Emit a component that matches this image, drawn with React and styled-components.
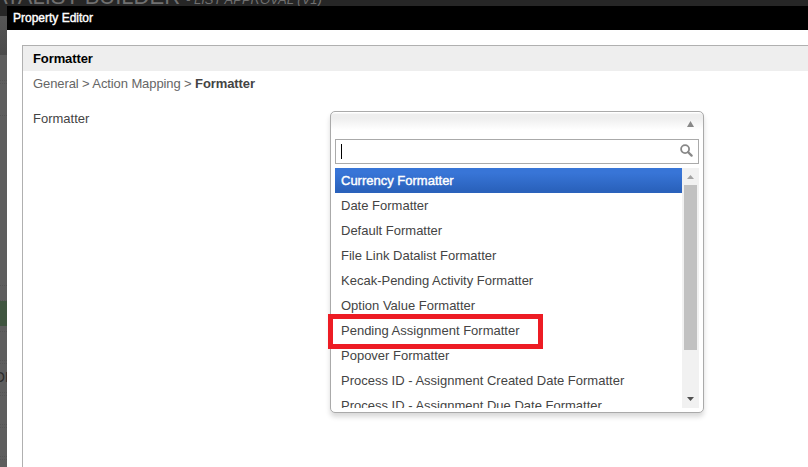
import React from 'react';
import styled, { createGlobalStyle } from 'styled-components';

const GlobalStyle = createGlobalStyle`
  * { box-sizing: border-box; }
  html, body { margin: 0; padding: 0; overflow: hidden; }
  body { font-family: "Liberation Sans", Arial, sans-serif; font-size: 13px; }
`;

const Page = styled.div`
  position: relative;
  width: 808px;
  height: 467px;
  overflow: hidden;
  background: #5e5e5e;
`;

const BuilderHeader = styled.header`
  height: 16px;
  overflow: hidden;
  background: #262626;
  color: #707070;
  white-space: nowrap;
`;

const BuilderHeading = styled.div`
  display: flex;
  align-items: baseline;
  margin: -16px 0 0 -7px;
`;

const BuilderTitle = styled.span`
  font-size: 22px;
  line-height: 26px;
`;

const BuilderSubtitle = styled.span`
  margin-left: 6px;
  font-size: 13px;
  font-style: italic;
`;

const BuilderToolbar = styled.div`
  height: 39px;
  background: linear-gradient(#555, #4b4b4b);
`;

const BuilderCanvas = styled.div`
  width: 7px;
  display: flex;
  flex-direction: column;
  overflow: hidden;
`;

const CanvasRow = styled.div`
  flex: none;
  height: ${(p) => p.$height}px;
  border-bottom: 1px dotted #555;
`;

const CanvasButton = styled.div`
  flex: none;
  height: 25px;
  background: #405540;
`;

const CanvasLabel = styled.div`
  flex: none;
  height: 28px;
  margin-left: -6px;
  color: #2b2b2b;
  font-size: 14px;
  line-height: 27px;
  white-space: nowrap;
`;

const Dialog = styled.section`
  position: absolute;
  inset: 6px 0 0 7px;
  display: flex;
  flex-direction: column;
  background: #fff;
`;

const TitleBar = styled.header`
  flex: none;
  height: 24px;
  padding-left: 6px;
  background: #000;
  color: #fff;
  font-size: 12px;
  -webkit-text-stroke: 0.4px #fff;
  line-height: 24px;
`;

const Panel = styled.div`
  flex: 1;
  margin: 15px 0 0 15px;
  border: solid #b0b0b0;
  border-width: 1px 0 0 1px;
`;

const PanelHeading = styled.h2`
  height: 25px;
  margin: 0;
  padding-left: 10px;
  background: #eee;
  color: #000;
  font-size: 13px;
  letter-spacing: -0.1px;
  line-height: 25px;
`;

const Breadcrumb = styled.nav`
  height: 40px;
  padding-left: 10px;
  color: #666;
  letter-spacing: -0.1px;
  line-height: 25px;
  white-space: pre;
  b { color: #444; }
`;

const Field = styled.div`
  display: flex;
  padding-left: 10px;
`;

const FieldLabel = styled.label`
  width: 297px;
  color: #444;
  line-height: 15px;
`;

const Select = styled.div`
  width: 374px;
  height: 302px;
  padding: 0 4px 4px;
  border: 1px solid #aaa;
  border-radius: 5px;
  background: #fff linear-gradient(#fff 0, #fff 1px, #eee 2px, #eee 6px, #fff 18px) no-repeat 0 0 / 100% 20px;
  box-shadow: 0 4px 5px rgba(0, 0, 0, 0.15);
`;

const SelectedValue = styled.div`
  height: 27px;
  padding: 9px 5px 0 0;
  display: flex;
  justify-content: flex-end;
`;

const SearchBox = styled.div`
  height: 25px;
  padding: 4px 5px;
  display: flex;
  justify-content: space-between;
  border: 1px solid #aaa;
`;

const Caret = styled.i`
  width: 1px;
  height: 15px;
  background: #000;
`;

const Results = styled.div`
  position: relative;
  height: 240px;
  margin-top: 4px;
  display: flex;
`;

const OptionList = styled.ul`
  flex: 1;
  margin: 0;
  padding: 0;
  list-style: none;
  overflow: hidden;
`;

const Option = styled.li`
  height: 25px;
  padding-left: 6px;
  color: ${(p) => (p.$active ? '#fff' : '#444')};
  background: ${(p) => (p.$active ? 'linear-gradient(#3875d7 20%, #2a62bc 90%)' : 'none')};
  -webkit-text-stroke: ${(p) => (p.$active ? '0.4px #fff' : '0')};
  line-height: 25px;
  white-space: nowrap;
`;

const Highlight = styled.span`
  position: absolute;
  left: -7px;
  top: 146px;
  width: 215px;
  height: 35px;
  border: 5px solid #ed1c24;
`;

const Scrollbar = styled.div`
  width: 17px;
  display: flex;
  flex-direction: column;
  align-items: center;
  background: #f1f1f1;
`;

const ScrollButton = styled.div`
  height: 17px;
  padding-top: ${(p) => p.$offset}px;
  display: flex;
`;

const Thumb = styled.div`
  width: 13px;
  height: 165px;
  margin-bottom: auto;
  background: #c1c1c1;
`;

const Triangle = ({ down, color, height = 4 }) => (
  <svg width="7" height={height} viewBox="0 0 7 4" preserveAspectRatio="none">
    <path d={down ? 'M0 0H7L3.5 4Z' : 'M0 4H7L3.5 0Z'} fill={color} />
  </svg>
);

const SearchIcon = () => (
  <svg width="13" height="13" viewBox="0 0 13 13" fill="none" stroke="#888">
    <circle cx="5.1" cy="5.1" r="4" strokeWidth="1.8" />
    <path d="M8.2 8.2L11.6 11.6" strokeWidth="2.3" strokeLinecap="round" />
  </svg>
);

const options = [
  { label: 'Currency Formatter', active: true },
  { label: 'Date Formatter' },
  { label: 'Default Formatter' },
  { label: 'File Link Datalist Formatter' },
  { label: 'Kecak-Pending Activity Formatter' },
  { label: 'Option Value Formatter' },
  { label: 'Pending Assignment Formatter' },
  { label: 'Popover Formatter' },
  { label: 'Process ID - Assignment Created Date Formatter' },
  { label: 'Process ID - Assignment Due Date Formatter' },
];

export default function App() {
  return (
    <>
      <GlobalStyle />
      <Page>
        <BuilderHeader>
          <BuilderHeading>
            <BuilderTitle>ATALIST BUILDER</BuilderTitle>
            <BuilderSubtitle>- LIST APPROVAL (V1)</BuilderSubtitle>
          </BuilderHeading>
        </BuilderHeader>
        <BuilderToolbar />
        <BuilderCanvas>
          <CanvasRow $height={26} />
          <CanvasRow $height={3} />
          <CanvasRow $height={32} />
          <CanvasRow $height={170} />
          <CanvasRow $height={15} />
          <CanvasButton />
          <CanvasRow $height={6} />
          <CanvasRow $height={29} />
          <CanvasRow $height={3} />
          <CanvasLabel>OF</CanvasLabel>
          <CanvasRow $height={1} />
          <CanvasRow $height={3} />
          <CanvasRow $height={29} />
          <CanvasRow $height={3} />
          <CanvasRow $height={29} />
          <CanvasRow $height={3} />
        </BuilderCanvas>
        <Dialog>
          <TitleBar>Property Editor</TitleBar>
          <Panel>
            <PanelHeading>Formatter</PanelHeading>
            <Breadcrumb>
              General &gt; Action Mapping &gt; <b>Formatter</b>
            </Breadcrumb>
            <Field>
              <FieldLabel>Formatter</FieldLabel>
              <Select>
                <SelectedValue><Triangle color="#888" height={6} /></SelectedValue>
                <SearchBox>
                  <Caret />
                  <SearchIcon />
                </SearchBox>
                <Results>
                  <OptionList>
                    {options.map(({ label, active }) => (
                      <Option key={label} $active={active}>{label}</Option>
                    ))}
                  </OptionList>
                  <Scrollbar>
                    <ScrollButton $offset={7}><Triangle color="#a3a3a3" /></ScrollButton>
                    <Thumb />
                    <ScrollButton $offset={6}><Triangle down color="#505050" /></ScrollButton>
                  </Scrollbar>
                  <Highlight />
                </Results>
              </Select>
            </Field>
          </Panel>
        </Dialog>
      </Page>
    </>
  );
}
